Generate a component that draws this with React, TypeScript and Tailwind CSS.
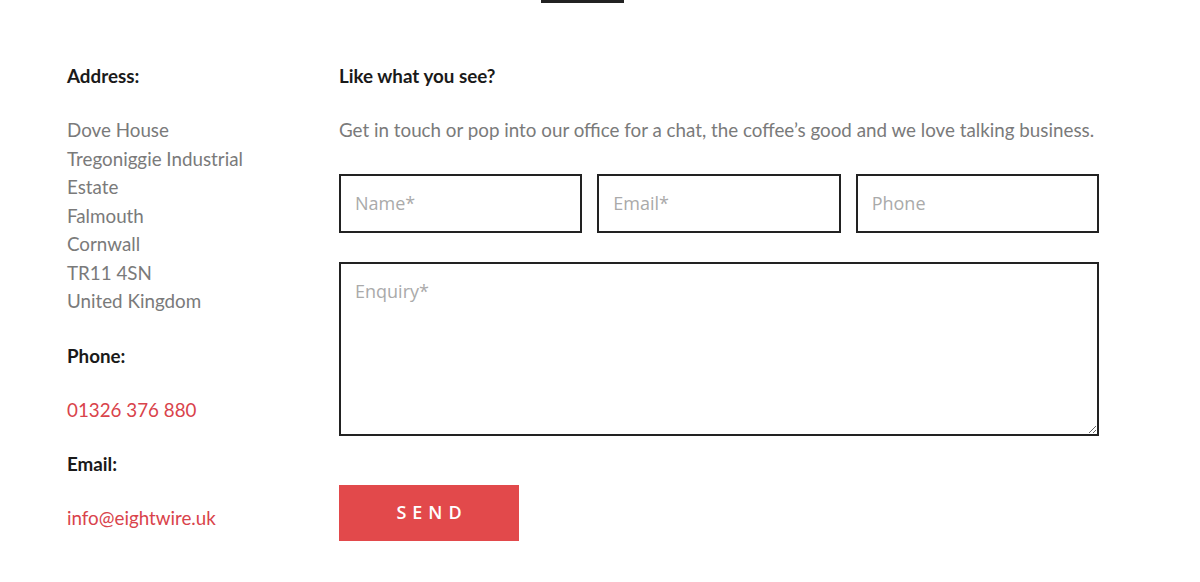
import React from "react";

export default function App() {
  const body = "font-['Lato','Liberation_Sans',sans-serif] text-[18.8px] leading-[28.5px] text-[#7a7a7a]";
  const head = "font-['Lato','Liberation_Sans',sans-serif] font-bold text-[18.8px] leading-[24px] text-[#1a1a1a]";
  const red = "font-['Lato','Liberation_Sans',sans-serif] text-[18.8px] leading-[28.5px] text-[#d9434b]";
  const input =
    "h-[59px] w-full border-2 border-[#222] bg-white px-[14px] font-['Open_Sans','Liberation_Sans',sans-serif] text-[18px] text-[#333] placeholder:text-[#aaa] outline-none";
  return (
    <div className="relative min-h-[582px] w-[1200px] bg-white">
      <div className="flex justify-center">
        <div className="ml-[-35px] h-[3px] w-[83px] bg-[#222]" />
      </div>
      <div className="flex pl-[67px] pt-[61px]">
        <div className="flex w-[272px] flex-col">
          <div className={head}>Address:</div>
          <div className={`${body} mt-[28px]`}>
            <div>Dove House</div>
            <div>Tregoniggie Industrial</div>
            <div>Estate</div>
            <div>Falmouth</div>
            <div>Cornwall</div>
            <div>TR11 4SN</div>
            <div>United Kingdom</div>
          </div>
          <div className={`${head} mt-[28px]`}>Phone:</div>
          <div className={`${red} mt-[28px]`}>01326 376 880</div>
          <div className={`${head} mt-[28px]`}>Email:</div>
          <div className={`${red} mt-[28px]`}>info@eightwire.uk</div>
        </div>
        <div className="flex w-[760px] flex-col">
          <div className={head}>Like what you see?</div>
          <div className={`${body} mt-[28px]`}>
            Get in touch or pop into our office for a chat, the coffee’s good and we love talking business.
          </div>
          <div className="mt-[29px] grid grid-cols-3 gap-[15px]">
            <input className={input} placeholder="Name*" />
            <input className={input} placeholder="Email*" />
            <input className={input} placeholder="Phone" />
          </div>
          <textarea
            className="mt-[29px] h-[174px] w-full border-2 border-[#222] bg-white px-[14px] py-[14px] font-['Open_Sans','Liberation_Sans',sans-serif] text-[18px] text-[#333] placeholder:text-[#aaa] outline-none"
            placeholder="Enquiry*"
          />
          <div className="mt-[49px]">
            <button className="flex h-[56px] w-[180px] items-center justify-center bg-[#e2494b] pl-[6px] font-['Open_Sans','Liberation_Sans',sans-serif] text-[18px] font-semibold tracking-[6px] text-white">
              SEND
            </button>
          </div>
        </div>
      </div>
    </div>
  );
}
